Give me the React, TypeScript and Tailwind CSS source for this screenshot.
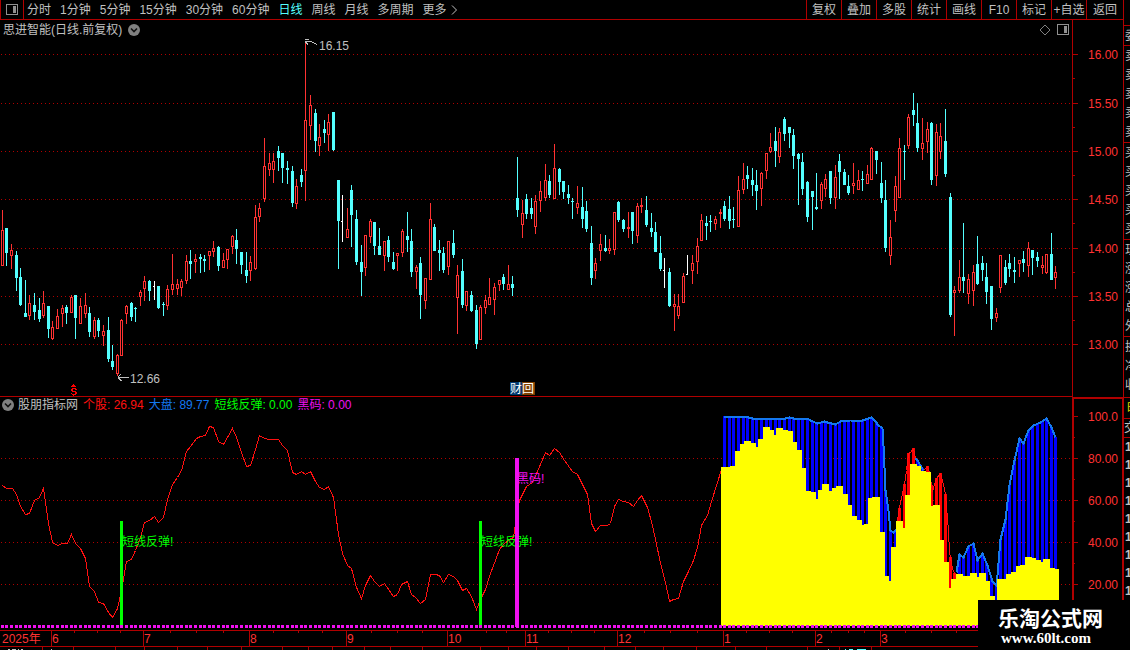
import React from 'react';

type Candle = [x: number, kind: 'u' | 'd' | 'w', high: number, top: number, bottom: number, low: number];
type Point = [number, number];

// x kind high bodyTop bodyBottom low  (u = up, d = down, w = unchanged)
const CANDLE_DATA = `
2 u 210 230 266 266|6 d 228 228 253 266|11 u 244 250 256 269|16 d 251 255 278 291|20 d 268 277 305 306
25 d 280 313 317 317|29 u 295 303 316 320|34 d 293 305 312 320|39 d 298 310 319 322|43 u 291 303 316 318
48 d 306 306 329 338|52 u 321 327 339 340|57 u 309 316 329 329|62 u 305 308 314 327|66 d 305 307 313 324
71 u 295 297 313 313|75 d 295 295 318 339|80 u 298 306 324 324|85 u 293 305 314 318|89 d 307 313 332 337
94 u 317 320 337 339|98 d 318 320 331 337|103 u 325 331 336 346|108 d 317 330 359 362|112 d 345 361 367 370
117 u 354 355 374 376|121 u 319 320 356 356|126 u 305 306 314 324|131 d 302 303 317 321|135 d 307 308 309 322
140 u 290 292 297 306|144 u 276 281 289 301|149 d 280 281 291 301|154 w 281 286 286 300|158 d 286 286 308 309
163 d 302 304 305 316|167 u 285 289 306 310|172 u 254 284 290 295|177 u 279 284 289 295|181 u 279 281 288 296
186 u 255 261 281 284|190 d 250 261 264 279|195 u 254 259 262 273|200 d 254 257 259 273|204 d 255 259 261 272
209 u 251 251 256 270|213 u 241 248 252 257|218 d 246 247 266 271|223 u 253 260 268 268|227 u 249 249 260 269
232 u 235 236 247 254|236 d 229 240 249 264|241 d 252 252 265 274|246 d 252 270 276 283|250 u 256 262 271 281
255 u 205 217 269 270|259 u 203 208 217 222|264 u 138 166 199 202|269 u 153 163 170 176|273 u 153 161 170 183
278 d 146 151 158 171|282 d 153 153 168 183|287 d 161 168 170 184|292 d 166 171 203 207|296 u 179 186 204 209
301 d 169 175 182 187|305 u 42 120 171 201|310 u 95 105 126 140|315 d 109 113 141 152|319 u 124 137 146 156
324 d 120 129 133 143|328 u 114 122 135 151|333 d 112 112 150 151|338 d 180 180 221 269|342 w 195 221 221 242
347 u 208 229 238 238|351 d 185 190 215 247|356 d 210 219 262 265|361 d 245 262 272 296|365 u 235 235 268 276
370 u 219 221 237 243|374 d 222 222 246 255|379 d 228 246 255 255|384 u 241 241 256 271|388 d 236 240 257 262
393 d 252 262 269 270|397 u 253 253 256 271|402 u 229 231 253 257|407 d 212 236 240 252|411 d 229 241 272 277
416 u 265 267 272 289|420 d 257 263 295 319|425 u 278 278 301 309|430 u 203 219 280 280|434 d 224 227 251 251
439 d 240 250 253 271|443 d 247 253 270 273|448 u 241 241 267 275|453 d 230 243 255 258|457 u 265 275 298 334
462 d 259 271 305 308|466 u 291 291 306 311|471 d 291 295 311 312|476 d 305 310 344 349|480 u 305 307 340 340
485 u 295 300 308 314|489 u 278 297 305 305|494 u 283 287 300 315|499 u 280 280 285 291|503 d 274 277 284 290
508 u 265 284 290 290|512 d 276 284 288 296|517 d 157 198 210 217|522 u 200 213 225 238|526 d 194 199 214 219
531 d 198 208 214 219|535 u 195 201 227 234|540 u 181 191 201 212|545 u 164 180 198 201|549 d 175 181 195 198
554 u 144 168 199 199|559 d 168 169 182 195|563 d 181 181 192 199|568 d 185 194 198 204|572 d 198 201 202 219
577 u 186 203 208 214|582 d 187 207 219 228|586 d 201 211 229 232|591 d 226 243 278 285|595 u 258 263 271 279
600 u 234 244 251 261|605 d 235 248 251 252|609 u 239 248 251 254|614 u 212 212 250 255|618 d 201 202 220 222
623 d 219 220 229 232|628 u 212 227 229 238|632 d 212 212 231 244|637 u 203 206 236 243|641 u 198 205 207 213
646 d 196 210 225 227|651 d 213 228 232 237|655 d 222 232 252 252|660 d 236 253 269 271|664 w 258 270 270 288
669 d 268 272 306 307|674 u 294 304 307 331|678 u 294 306 316 319|683 u 273 276 303 303|687 w 255 274 274 275
692 u 255 263 271 284|697 u 238 246 262 274|701 u 214 220 241 241|706 d 216 223 226 240|710 d 215 221 222 232
715 u 216 219 224 230|720 u 209 212 214 228|724 d 201 206 219 221|729 d 196 209 221 229|733 d 207 219 220 228
738 u 176 190 227 227|743 u 163 179 190 194|747 d 166 175 179 189|752 d 168 180 185 196|756 d 170 185 191 210
761 u 172 173 189 206|766 u 153 153 171 179|770 u 133 147 152 153|775 d 127 141 151 167|779 u 128 132 157 163
784 d 117 119 134 141|789 d 127 127 133 148|793 d 129 135 156 169|798 d 153 154 159 205|802 d 153 162 189 195
807 d 181 182 217 222|812 d 191 191 197 230|816 d 173 207 209 210|821 u 182 184 201 209|825 u 174 179 189 197
830 d 171 171 198 204|835 u 165 177 198 209|839 d 154 161 172 199|844 d 169 172 185 185|848 d 175 186 193 195
853 u 163 183 186 194|858 u 170 180 190 190|862 d 171 179 180 191|867 u 165 174 184 184|871 u 147 148 180 180
876 d 151 151 160 174|881 d 162 183 198 203|885 d 180 200 248 252|890 u 220 237 256 265|895 u 176 186 211 222
899 u 138 148 198 198|904 d 145 151 152 180|908 u 114 117 146 149|913 d 93 110 115 126|917 d 103 123 148 152
922 u 118 143 149 160|927 u 122 129 142 153|931 d 122 123 180 185|936 u 124 132 176 186|940 u 123 136 152 159
945 d 109 141 174 177|950 d 193 197 315 317|954 u 286 290 293 336|959 u 260 277 291 293|963 d 223 277 281 293
968 u 274 279 294 304|973 u 265 272 291 306|977 d 236 264 284 285|982 d 256 263 270 281|986 d 263 277 292 304
991 d 286 286 319 330|996 u 308 313 318 322|1000 u 255 255 288 293|1005 d 260 267 283 285|1009 d 254 263 269 277
1014 d 257 270 272 283|1019 u 260 260 264 277|1023 d 251 259 263 272|1028 u 242 248 266 277|1032 d 250 250 258 275
1037 d 252 257 261 267|1042 u 256 265 268 274|1046 u 254 254 273 274|1051 d 233 254 280 280|1055 u 266 272 278 289
`;

const CANDLES: Candle[] = CANDLE_DATA.trim()
  .split(/[|\n]/)
  .map(row => {
    const [x, kind, ...rest] = row.trim().split(' ');
    const [high, top, bottom, low] = rest.map(Number);
    return [Number(x), kind as Candle[1], high, top, bottom, low];
  });

const toPoints = (text: string): Point[] =>
  text.trim().split(/\s+/).map(pair => pair.split(',').map(Number) as Point);

const STOCK_LINE = `2,485 6,488 12,488 16,494 20,506 25,514 29,513 34,500 39,497 43,488 48,523 52,542 57,545 62,543 67,543
71,534 75,543 80,548 85,558 89,586 94,591 98,602 103,603 108,612 112,617 117,608 121,590 126,561 131,559 135,550 140,537
144,522 149,520 154,516 158,522 163,517 167,499 172,484 177,477 181,470 186,451 190,446 196,438 200,436 205,435 209,426
213,427 218,441 223,444 227,437 232,428 236,437 241,452 246,466 250,465 255,449 259,435 264,438 269,439 278,439 282,445
287,450 292,472 296,474 301,471 305,474 310,471 315,481 319,487 324,489 328,486 333,497 338,534 342,553 347,565 351,568
356,587 361,598 365,585 370,575 374,581 379,586 384,583 393,596 397,594 401,584 407,581 411,594 415,597 420,603 425,599
430,574 435,574 439,575 443,582 448,574 453,576 457,580 462,590 466,588 471,596 476,609 481,597 485,589 490,573 495,560
499,549 504,543 509,539 513,537 515,523 519,500 526,486 532,482 537,471 545,452 549,455 554,448 559,452 564,460 572,471
577,474 582,484 587,494 591,523 595,531 600,525 607,525 610,523 614,506 618,499 623,501 628,502 633,506 637,500 641,495
647,507 652,525 656,544 661,567 665,582 669,601 673,599 678,598 683,581 688,571 693,560 697,547 701,525 707,515 711,501 721,469`;

const MARKET = { color: '#1478f0', fill: '#0000ff', width: 2 };
const STOCK = { color: '#ff1010', fill: '#ff0000', width: 1 };

const TREND_SEGMENTS = [
  {
    ...MARKET,
    points: toPoints(`723,416 742,416 748,417 752,418 761,418 777,418 785,418 789,417 793,418 807,418 810,420 817,423
      824,421 827,422 835,424 840,421 850,420 862,420 871,417 875,421 878,425 882,428 883,445 885,490 888,510 890,530 893,532 896,529`),
  },
  { ...STOCK, points: toPoints('896,529 897,520 900,502 904,484 906,470 908,453 910,452 913,448 915,458') },
  { ...MARKET, points: toPoints('915,458 917,460 920,465 923,470') },
  {
    ...STOCK,
    points: toPoints('923,470 925,468 927,466 929,472 932,491 934,484 936,478 940,473 943,484 945,494 948,530 949,552 952,568 954,573 956,578'),
  },
  {
    ...MARKET,
    points: toPoints(`956,572 959,554 963,557 968,546 973,543 977,560 982,553 987,565 992,581 996,585 997,575 1000,539
      1005,519 1009,485 1014,460 1019,438 1023,443 1028,430 1033,425 1040,422 1046,418 1051,427 1055,437`),
  },
];

// each step starts at x and holds its height until the next one
const YELLOW_STEPS = toPoints(`721,467 730,466 735,451 740,444 744,441 751,443 756,447 758,439 763,427 770,430 774,435 776,428
783,430 788,431 793,442 797,450 802,468 806,491 811,492 816,499 818,490 822,484 829,491 832,488 836,486 843,494 848,505
852,516 857,520 862,525 864,524 868,498 872,497 880,532 885,576 889,581 891,547 896,521 903,528 905,495 910,464 917,466
921,471 926,472 931,506 933,505 940,540 944,562 949,588 951,579 956,574 963,576 970,573 977,577 979,573 986,581 990,596
995,600 997,579 1006,574 1011,572 1016,566 1020,565 1025,557 1032,558 1036,560 1041,562 1043,559 1050,568 1055,569`);

const YELLOW_PATH =
  'M721 626' + YELLOW_STEPS.map(([, y], i) => `V${y}H${YELLOW_STEPS[i + 1]?.[0] ?? 1059}`).join('') + 'V626Z';

const heightAt = (points: Point[], x: number) => {
  const next = points.findIndex(p => p[0] >= x);
  if (next <= 0) return points[0][1];
  const [x0, y0] = points[next - 1];
  const [x1, y1] = points[next];
  return Math.round(y0 + ((y1 - y0) * (x - x0)) / (x1 - x0));
};

const BARS = CANDLES.filter(c => c[0] >= 724).map(([x]) => {
  const segment = TREND_SEGMENTS.find(s => x <= s.points[s.points.length - 1][0]) ?? TREND_SEGMENTS[4];
  return { x, y: heightAt(segment.points, x), fill: segment.fill };
});

const PERIODS = ['分时', '1分钟', '5分钟', '15分钟', '30分钟', '60分钟', '日线', '周线', '月线', '多周期'];
const TOOLS = ['复权', '叠加', '多股', '统计', '画线', 'F10', '标记', '+自选', '返回'];
const PRICES: [number, string][] = [
  [54, '16.00'], [103, '15.50'], [151, '15.00'], [199, '14.50'], [248, '14.00'], [296, '13.50'], [344, '13.00'],
];
const LEVELS: [number, string][] = [[416, '100.0'], [458, '80.00'], [500, '60.00'], [542, '40.00'], [584, '20.00']];
const MONTHS: [number, string][] = [
  [51, '6'], [143, '7'], [249, '8'], [346, '9'], [447, '10'], [525, '11'], [617, '12'], [723, '1'], [815, '2'], [880, '3'],
];
const WEEK_TICKS = [74, 97, 120, 170, 196, 223, 273, 298, 322, 371, 397, 422, 486, 506, 548, 571, 594, 644, 670, 697, 746, 769, 792, 831, 848, 864, 905, 931, 956];
const LOWER_TICKS = [42, 73, 115, 144, 177, 207, 241, 282, 308, 332, 364, 390, 422, 480, 508, 536, 568, 604, 635, 663, 696, 735, 766, 807, 839, 871];

const SIDE_BLOCKS: { chars: string; height: string }[] = [
  { chars: '委', height: 'h-[20px]' },
  { chars: '卖卖卖卖卖', height: 'h-[97px]' },
  { chars: '买买买买买', height: 'h-[97px]' },
  { chars: '现涨涨总外', height: 'h-[97px]' },
  { chars: '换净收', height: 'h-[61px]' },
];

const PanelIcon: React.FC = () => (
  <svg className="size-3" viewBox="0 0 12 12" fill="none" shapeRendering="crispEdges">
    <rect x="0.5" y="0.5" width="11" height="10" stroke="#909090" />
    <rect x="7" y="2" width="3" height="7" fill="#909090" />
  </svg>
);

const CollapseIcon: React.FC = () => (
  <svg className="size-3" viewBox="0 0 12 12">
    <circle cx="6" cy="6" r="6" fill="#808080" />
    <path d="M3 4.5 6 7.5 9 4.5" stroke="#101010" strokeWidth="1.6" fill="none" />
  </svg>
);

const GridLines: React.FC<{ rows: number[] }> = ({ rows }) => (
  <>
    {rows.map(y => (
      <line key={y} x1="1" x2="1072" y1={y + 0.5} y2={y + 0.5} stroke="#b00000" strokeDasharray="1 3" />
    ))}
  </>
);

const CandleShape: React.FC<{ candle: Candle }> = ({ candle: [x, kind, high, top, bottom, low] }) => {
  if (kind === 'w') {
    return (
      <g fill="#ffffff">
        <rect x={x} y={high} width="1" height={low - high} />
        <rect x={x - 1} y={top} width="1" height="1" />
      </g>
    );
  }
  const color = kind === 'u' ? '#ff3232' : '#54ffff';
  return (
    <g fill={color}>
      <rect x={x} y={high} width="1" height={low - high} />
      <rect x={x - 1} y={top} width="3" height={bottom - top} />
      {kind === 'u' && bottom - top > 2 && (
        <rect x={x} y={top + 1} width="1" height={bottom - top - 2} fill="#000000" />
      )}
    </g>
  );
};

const PriceChart: React.FC = () => (
  <svg className="block w-full flex-1 min-h-0" viewBox="0 39 1072 357" preserveAspectRatio="none" shapeRendering="crispEdges">
    <GridLines rows={PRICES.map(p => p[0])} />
    {CANDLES.map(candle => (
      <CandleShape key={candle[0]} candle={candle} />
    ))}
    <g stroke="#c0c0c0" fill="none">
      <path d="M305.5 43V40.5M305 39.5H309M306 41.5H311L317 44.5M306 42l2 3" />
      <path d="M118 377.5H129M118 377l3-3M118 378l4 3" />
    </g>
    <g fill="#c0c0c0" className="text-xs">
      <text x="319" y="50">16.15</text>
      <text x="130" y="383">12.66</text>
    </g>
    <path
      d="M73 384.5h1M72 385.5h3M71 386.5h5M72 388.5h4M71 389.5h2M75 389.5h2M71 390.5h2M72 391.5h4M75 392.5h2M71 393.5h1M75 393.5h2M72 394.5h4M73 395.5h1"
      stroke="#ff0000"
    />
    <rect x="510" y="382" width="12" height="13" fill="#003870" />
    <rect x="522" y="382" width="13" height="13" fill="#804000" />
    <g fill="#ffffff" className="text-xs">
      <text x="510" y="393">财</text>
      <text x="522" y="393">回</text>
    </g>
  </svg>
);

const IndicatorChart: React.FC = () => (
  <svg className="block w-full flex-1 min-h-0" viewBox="0 414 1072 216" preserveAspectRatio="none" shapeRendering="crispEdges">
    <GridLines rows={LEVELS.slice(1).map(l => l[0])} />
    <polyline points={STOCK_LINE} stroke="#ff1010" fill="none" transform="translate(0.5 0.5)" />
    <g className="text-xs">
      <text x="122" y="546" fill="#00ff00">短线反弹!</text>
      <text x="481" y="546" fill="#00ff00">短线反弹!</text>
      <text x="517" y="483" fill="#f010f0">黑码!</text>
    </g>
    {BARS.map(bar => (
      <rect key={bar.x} x={bar.x - 1} y={bar.y} width="3" height={626 - bar.y} fill={bar.fill} />
    ))}
    {TREND_SEGMENTS.map((segment, i) => (
      <polyline
        key={i}
        points={segment.points.map(p => p.join(',')).join(' ')}
        stroke={segment.color}
        strokeWidth={segment.width}
        fill="none"
        transform="translate(0.5 0.5)"
      />
    ))}
    <path d={YELLOW_PATH} fill="#ffff00" />
    <rect x="120" y="521" width="3" height="105" fill="#00ff00" />
    <rect x="479" y="521" width="3" height="105" fill="#00ff00" />
    {CANDLES.map(([x]) => (
      <rect key={x} x={x - 1} y="625" width="3" height="3" fill="#f010f0" />
    ))}
    <rect x="515" y="458" width="4" height="169" fill="#f010f0" />
  </svg>
);

const Scale: React.FC<{ marks: [number, string][]; viewBox: string; step: number }> = ({ marks, viewBox, step }) => (
  <svg className="block w-full h-full" viewBox={viewBox} preserveAspectRatio="none" shapeRendering="crispEdges">
    {marks.map(([y, label], i) => (
      <g key={label} fill="#b00000">
        <rect x="1073" y={y} width="5" height="1" />
        {i < marks.length - 1 && <rect x="1073" y={y + step} width="2" height="1" />}
        <text x="1118" y={y + 5} textAnchor="end" fill="#ff3232" className="text-xs">{label}</text>
      </g>
    ))}
  </svg>
);

const Toolbar: React.FC = () => (
  <header className="flex items-stretch justify-between border-b border-l border-[#b00000]">
    <nav className="flex items-stretch">
      <button aria-label="侧栏" className="flex w-[23px] items-center justify-center border-r border-[#b00000]">
        <PanelIcon />
      </button>
      <div className="flex gap-[9px] pl-[3px]">
        {PERIODS.map(period => (
          <button key={period} className={period === '日线' ? 'text-[#54ffff]' : ''}>{period}</button>
        ))}
        <button className="flex items-center gap-1">
          更多
          <svg className="h-2.5 w-1.5" viewBox="0 0 6 10" fill="none" stroke="#c0c0c0">
            <path d="M1 0.5 5.5 5 1 9.5" />
          </svg>
        </button>
      </div>
    </nav>
    <div className="flex">
      {TOOLS.map(tool => (
        <button key={tool} className="w-[35px] whitespace-nowrap border-l border-[#b00000] last:w-[37px]">{tool}</button>
      ))}
    </div>
  </header>
);

const TimeAxis: React.FC = () => (
  <div className="border-y border-[#b00000]">
    <svg className="block w-full h-full" viewBox="0 631 1123 15" preserveAspectRatio="none" shapeRendering="crispEdges">
      <text x="2" y="643" fill="#ff3232" className="text-xs">2025年</text>
      {MONTHS.map(([x, label]) => (
        <g key={x}>
          <rect x={x} y="631" width="1" height="15" fill="#b00000" />
          <text x={x + 1} y="643" fill="#ff3232" className="text-xs">{label}</text>
        </g>
      ))}
      {WEEK_TICKS.map(x => (
        <rect key={x} x={x} y="631" width="1" height="2" fill="#b00000" />
      ))}
    </svg>
  </div>
);

const LowerEdge: React.FC = () => (
  <svg className="block w-full h-full" viewBox="0 647 1123 3" preserveAspectRatio="none" shapeRendering="crispEdges">
    {LOWER_TICKS.map(x => (
      <rect key={x} x={x} y="647" width="1" height="3" fill="#b00000" />
    ))}
    <path d="M8 649.5h2M12 649.5h4M18 649.5h1M21 649.5h2M51 649.5h1M828 649.5h1" stroke="#c0c0c0" />
    <path d="M845 649.5h1M849 649.5h4M857 649.5h9" stroke="#54ffff" />
  </svg>
);

const SideStrip: React.FC = () => (
  <aside className="w-[7px] overflow-hidden border-l border-[#b00000] pt-[25px]">
    {SIDE_BLOCKS.map(({ chars, height }) => (
      <div key={chars} className={`${height} border-t border-[#b00000] pl-px pt-px leading-[19px]`}>
        {[...chars].map((char, i) => (
          <div key={i} className="w-3">{char}</div>
        ))}
      </div>
    ))}
    <div className="h-[21px] border-t border-[#b00000] pl-[3px] leading-5 text-[#e0e000]">
      <span>时</span>
    </div>
    <div className="h-[19px] border-t border-[#b00000] leading-[18px]">
      <span>交</span>
    </div>
    <ul className="border-t border-[#b00000] pl-px font-bold leading-[18px]">
      {Array.from({ length: 9 }).map((_, i) => (
        <li key={i}>1</li>
      ))}
    </ul>
  </aside>
);

export default function App() {
  return (
    <div className="relative flex h-screen overflow-hidden bg-black font-['Liberation_Sans','Noto_Sans_CJK_SC',sans-serif] text-xs text-[#c0c0c0]">
      <main className="grid min-w-0 flex-1 grid-rows-[20px_minmax(0,377fr)_minmax(0,233fr)_17px_3px]">
        <Toolbar />
        <section className="flex">
          <div className="flex flex-1 flex-col border-b border-[#b00000]">
            <div className="flex h-[19px] items-center gap-1.5 px-[3px]">
              <h1>思进智能(日线.前复权)</h1>
              <CollapseIcon />
              <svg className="ml-auto size-3" viewBox="0 0 12 12" fill="none" stroke="#808080">
                <path d="M6 1 11 6 6 11 1 6z" />
              </svg>
              <PanelIcon />
            </div>
            <PriceChart />
          </div>
          <div className="w-[51px] border-l border-[#b00000]">
            <Scale marks={PRICES} viewBox="1073 20 50 377" step={24} />
          </div>
        </section>
        <section className="flex">
          <div className="flex flex-1 flex-col">
            <div className="flex h-[17px] items-start gap-[5px] pl-0.5 leading-4">
              <div className="flex items-center gap-1">
                <CollapseIcon />
                <h2>股朋指标网</h2>
              </div>
              <span className="text-[#ff1010]">个股: 26.94</span>
              <span className="text-[#1478f0]">大盘: 89.77</span>
              <span className="text-[#00ff00]">短线反弹: 0.00</span>
              <span className="text-[#f010f0]">黑码: 0.00</span>
            </div>
            <IndicatorChart />
          </div>
          <div className="w-[51px] border-l-2 border-r border-t-2 border-[#b00000]">
            <Scale marks={LEVELS} viewBox="1074 399 48 231" step={21} />
          </div>
        </section>
        <TimeAxis />
        <LowerEdge />
      </main>
      <SideStrip />
      <div className="absolute bottom-0 right-0 flex h-[50px] w-[152px] flex-col items-start bg-black pl-5 pt-2 text-white">
        <strong className="text-[21px] leading-[22px]">乐淘公式网</strong>
        <a href="#" className="ml-[3px] font-['Liberation_Serif',serif] text-[15px] font-bold leading-4">www.60lt.com</a>
      </div>
    </div>
  );
}
